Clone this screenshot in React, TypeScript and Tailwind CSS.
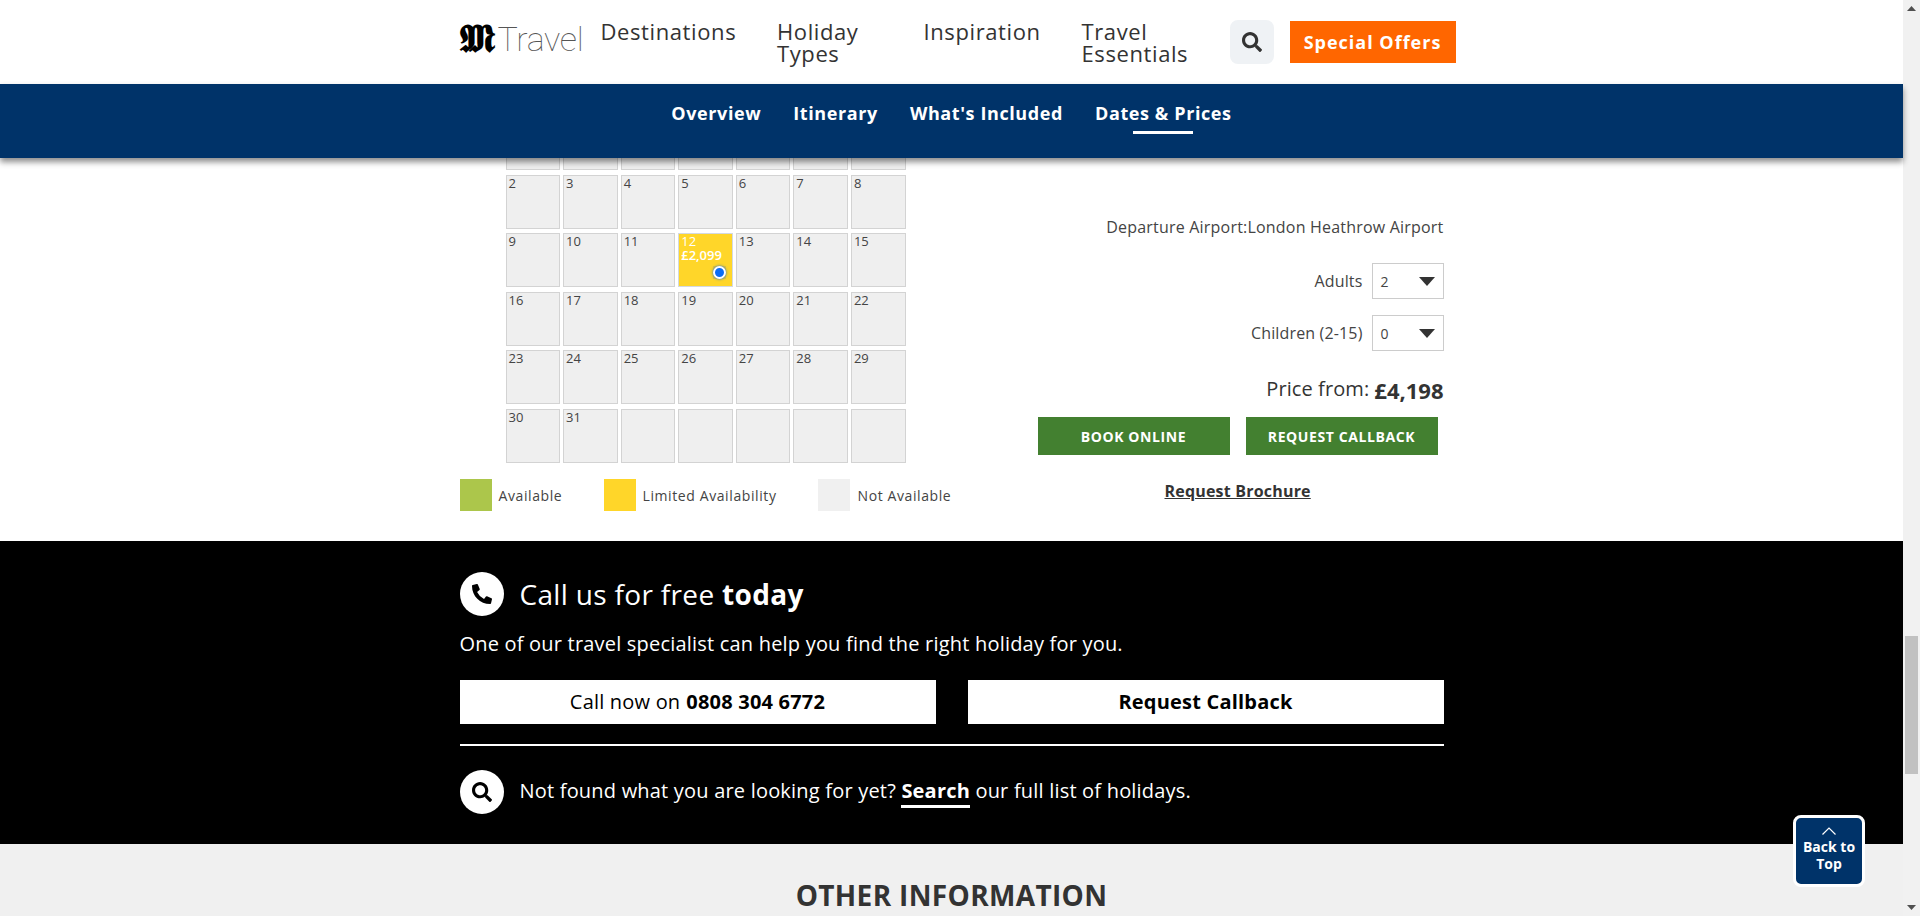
import React from 'react';
import { FaPhoneAlt, FaSearch } from 'react-icons/fa';

const navItems = [
  { label: 'Destinations', width: 'w-[176.5px]' },
  { label: 'Holiday Types', width: 'w-[146.5px]' },
  { label: 'Inspiration', width: 'w-[158px]' },
  { label: 'Travel Essentials', width: 'w-[148px]' },
];

const subNav = ['Overview', 'Itinerary', "What's Included", 'Dates & Prices'];

const rows: (number | null)[][] = [
  [2, 3, 4, 5, 6, 7, 8],
  [9, 10, 11, 12, 13, 14, 15],
  [16, 17, 18, 19, 20, 21, 22],
  [23, 24, 25, 26, 27, 28, 29],
  [30, 31, null, null, null, null, null],
];

const Cell: React.FC<{ day: number | null }> = ({ day }) => {
  if (day === 12) {
    return (
      <div className="relative h-[54px] border border-[#d3d9e0] bg-[#ffd629] px-[2px] pt-[1px] text-[13px] leading-[13px] text-white">
        <div>12</div>
        <div className="pt-[1px] font-semibold">£2,099</div>
        <span className="absolute top-[32px] left-[34px] flex h-[13px] w-[13px] items-center justify-center bg-[#e3c33a]">
          <span className="h-[13px] w-[13px] rounded-full border-2 border-white bg-[#0a6cf5] shadow-[0_0_3px_#1a6ccc]" />
        </span>
      </div>
    );
  }
  return (
    <div className="h-[54px] border border-[#d3d3d3] bg-[#efefef] px-[2px] text-[13px] leading-[15px] text-[#444]">
      {day}
    </div>
  );
};

const Dropdown: React.FC<{ label: string; value: string }> = ({ label, value }) => (
  <div className="flex items-center justify-end gap-[9px]">
    <span className="text-[16px] tracking-[0.15px] text-[#444]">{label}</span>
    <div className="flex h-[36px] w-[72px] items-center justify-between border border-[#ccc] pr-[8px] pl-[8px] text-[14px] text-[#444]">
      {value}
      <svg width="16" height="9" viewBox="0 0 16 9">
        <path d="M0 0H16L8 9Z" fill="#333" />
      </svg>
    </div>
  </div>
);

const Legend: React.FC<{ color: string; label: string; width: string; gap: string }> = ({ color, label, width, gap }) => (
  <div className={`flex items-center ${width} ${gap}`}>
    <span className={`h-[32px] w-[32px] ${color}`} />
    <span className="text-[14px] tracking-[0.6px] text-[#444]">{label}</span>
  </div>
);

const App: React.FC = () => {
  return (
    <div className="flex h-[916px] w-full overflow-hidden font-['Open_Sans',sans-serif]">
      <div className="relative min-w-0 flex-1">
        <header className="h-[84px] bg-white">
          <div className="mx-auto flex w-[984px]">
            <div className="flex h-[84px] w-[141px] shrink-0 items-center pb-[7px]">
              <span className="font-['DejaVu_Serif',serif] text-[38px] leading-none font-bold tracking-[-2px] text-black">𝕸</span>
              <span className="ml-[5px] font-['Roboto',sans-serif] text-[34px] leading-none font-thin tracking-[-0.3px] text-[#555]">Travel</span>
            </div>
            {navItems.map((item) => (
              <a key={item.label} className={`block shrink-0 pt-[20px] pr-[20px] text-[22px] leading-[22px] tracking-[0.6px] text-[#333] ${item.width}`}>
                {item.label}
              </a>
            ))}
            <div className="mt-[20px] flex h-[44px] w-[44px] shrink-0 items-center justify-center rounded-lg bg-[#eff2f5] text-[#333]">
              <FaSearch size={20} />
            </div>
            <div className="mt-[21px] ml-[16px] flex h-[42px] w-[166px] shrink-0 items-center justify-center bg-[#ff6600] text-[18px] font-bold tracking-[1px] text-white">
              Special Offers
            </div>
          </div>
        </header>

        <nav className="relative z-10 flex h-[74px] justify-center gap-[32px] bg-[#003369] pt-[17px] shadow-[0_4px_6px_rgba(0,0,0,0.45)]">
          {subNav.map((label, i) => (
            <div key={label} className="relative h-[24px] text-[18px] leading-[24px] font-bold tracking-[0.6px] text-white">
              {label}
              {i === 3 && <span className="absolute top-[30px] left-[38px] h-[3px] w-[60px] bg-white" />}
            </div>
          ))}
        </nav>

        <section className="h-[383px] bg-white">
          <div className="mx-auto flex w-[984px]">
            <div className="w-[560px]">
              <div className="ml-[46px] w-[400px]">
                <div className="mb-[4.7px] grid grid-cols-7 gap-x-[3px]">
                  {[0, 1, 2, 3, 4, 5, 6].map((i) => (
                    <div key={i} className="h-[12px] border border-t-0 border-[#d3d3d3] bg-[#efefef]" />
                  ))}
                </div>
                <div className="grid grid-cols-7 gap-x-[3px] gap-y-[4.6px]">
                  {rows.flat().map((day, i) => (
                    <Cell key={i} day={day} />
                  ))}
                </div>
              </div>
              <div className="mt-[16px] flex">
                <Legend color="bg-[#acc64b]" label="Available" width="w-[144px]" gap="gap-[7px]" />
                <Legend color="bg-[#ffd629]" label="Limited Availability" width="w-[214px]" gap="gap-[7px]" />
                <Legend color="bg-[#f0f0f0]" label="Not Available" width="w-[140px]" gap="gap-[8px]" />
              </div>
            </div>
            <div className="flex flex-1 flex-col pt-[58px]">
              <div className="text-right text-[16px] leading-[22px] tracking-[0.2px] text-[#444]">Departure Airport:London Heathrow Airport</div>
              <div className="mt-[25px]">
                <Dropdown label="Adults" value="2" />
              </div>
              <div className="mt-[16px]">
                <Dropdown label="Children (2-15)" value="0" />
              </div>
              <div className="mt-[24px] flex h-[30px] items-center justify-end gap-[5px] text-[#333]">
                <span className="pb-[2px] text-[20px] tracking-[0.1px]">Price from:</span>
                <span className="text-[22px] font-bold">£4,198</span>
              </div>
              <div className="mt-[12px] ml-[18px] flex gap-[16px]">
                <button className="h-[38px] w-[192px] bg-[#438030] text-[14px] font-bold tracking-[0.6px] text-white uppercase">Book Online</button>
                <button className="h-[38px] w-[192px] bg-[#438030] text-[14px] font-bold tracking-[0.6px] text-white uppercase">Request Callback</button>
              </div>
              <a className="mt-[25px] ml-[145px] w-fit text-[16px] leading-[22px] font-bold tracking-[0.2px] text-[#333] underline">Request Brochure</a>
            </div>
          </div>
        </section>

        <section className="h-[303px] bg-black text-white">
          <div className="mx-auto w-[984px] pt-[31px] tracking-[0.2px]">
            <div className="flex items-center gap-[16px]">
              <span className="flex h-[44px] w-[44px] items-center justify-center rounded-full bg-white text-black">
                <FaPhoneAlt size={20} />
              </span>
              <span className="text-[28px] tracking-[0.33px]">
                Call us for free <b>today</b>
              </span>
            </div>
            <p className="mt-[14px] text-[20px] leading-[28px]">One of our travel specialist can help you find the right holiday for you.</p>
            <div className="mt-[22px] flex gap-[32px]">
              <a className="flex h-[44px] flex-1 items-center justify-center gap-[6px] bg-white text-[20px] text-black">
                Call now on <b>0808 304 6772</b>
              </a>
              <a className="flex h-[44px] flex-1 items-center justify-center bg-white text-[20px] font-bold text-black">Request Callback</a>
            </div>
            <div className="mt-[20px] h-[2px] bg-white" />
            <div className="mt-[24px] flex items-center gap-[16px]">
              <span className="flex h-[44px] w-[44px] items-center justify-center rounded-full bg-white text-black">
                <FaSearch size={20} />
              </span>
              <span className="-mt-[2px] text-[20px]">
                Not found what you are looking for yet? <b className="border-b-[3px] border-white pb-[1px]">Search</b> our full list of holidays.
              </span>
            </div>
          </div>
        </section>

        <section className="h-[72px] bg-[#f0f0f0] pt-[32px] text-center text-[28px] leading-[38px] font-bold tracking-[0.35px] text-[#333]">OTHER INFORMATION</section>

        <button className="absolute right-[38px] bottom-[29px] z-20 flex h-[72px] w-[72px] flex-col items-center rounded-lg border-[3px] border-white bg-[#003369] pt-[9px] text-[14px] leading-[17px] font-bold text-white">
          <svg width="14" height="8" viewBox="0 0 14 8" className="mb-[3px]">
            <path d="M0.5 7.5L7 1L13.5 7.5" fill="none" stroke="#fff" strokeWidth="1.2" />
          </svg>
          Back to
          <br />
          Top
        </button>
      </div>

      <div className="flex w-[17px] flex-col bg-[#f1f1f1]">
        <div className="flex h-[17px] items-center justify-center">
          <svg width="9" height="5" viewBox="0 0 9 5"><path d="M0 5L4.5 0L9 5Z" fill="#505050" /></svg>
        </div>
        <div className="mt-[619px] ml-[2px] h-[138px] w-[13px] bg-[#c1c1c1]" />
        <div className="mt-auto flex h-[17px] items-center justify-center">
          <svg width="9" height="5" viewBox="0 0 9 5"><path d="M0 0L9 0L4.5 5Z" fill="#505050" /></svg>
        </div>
      </div>
    </div>
  );
};

export default App;
